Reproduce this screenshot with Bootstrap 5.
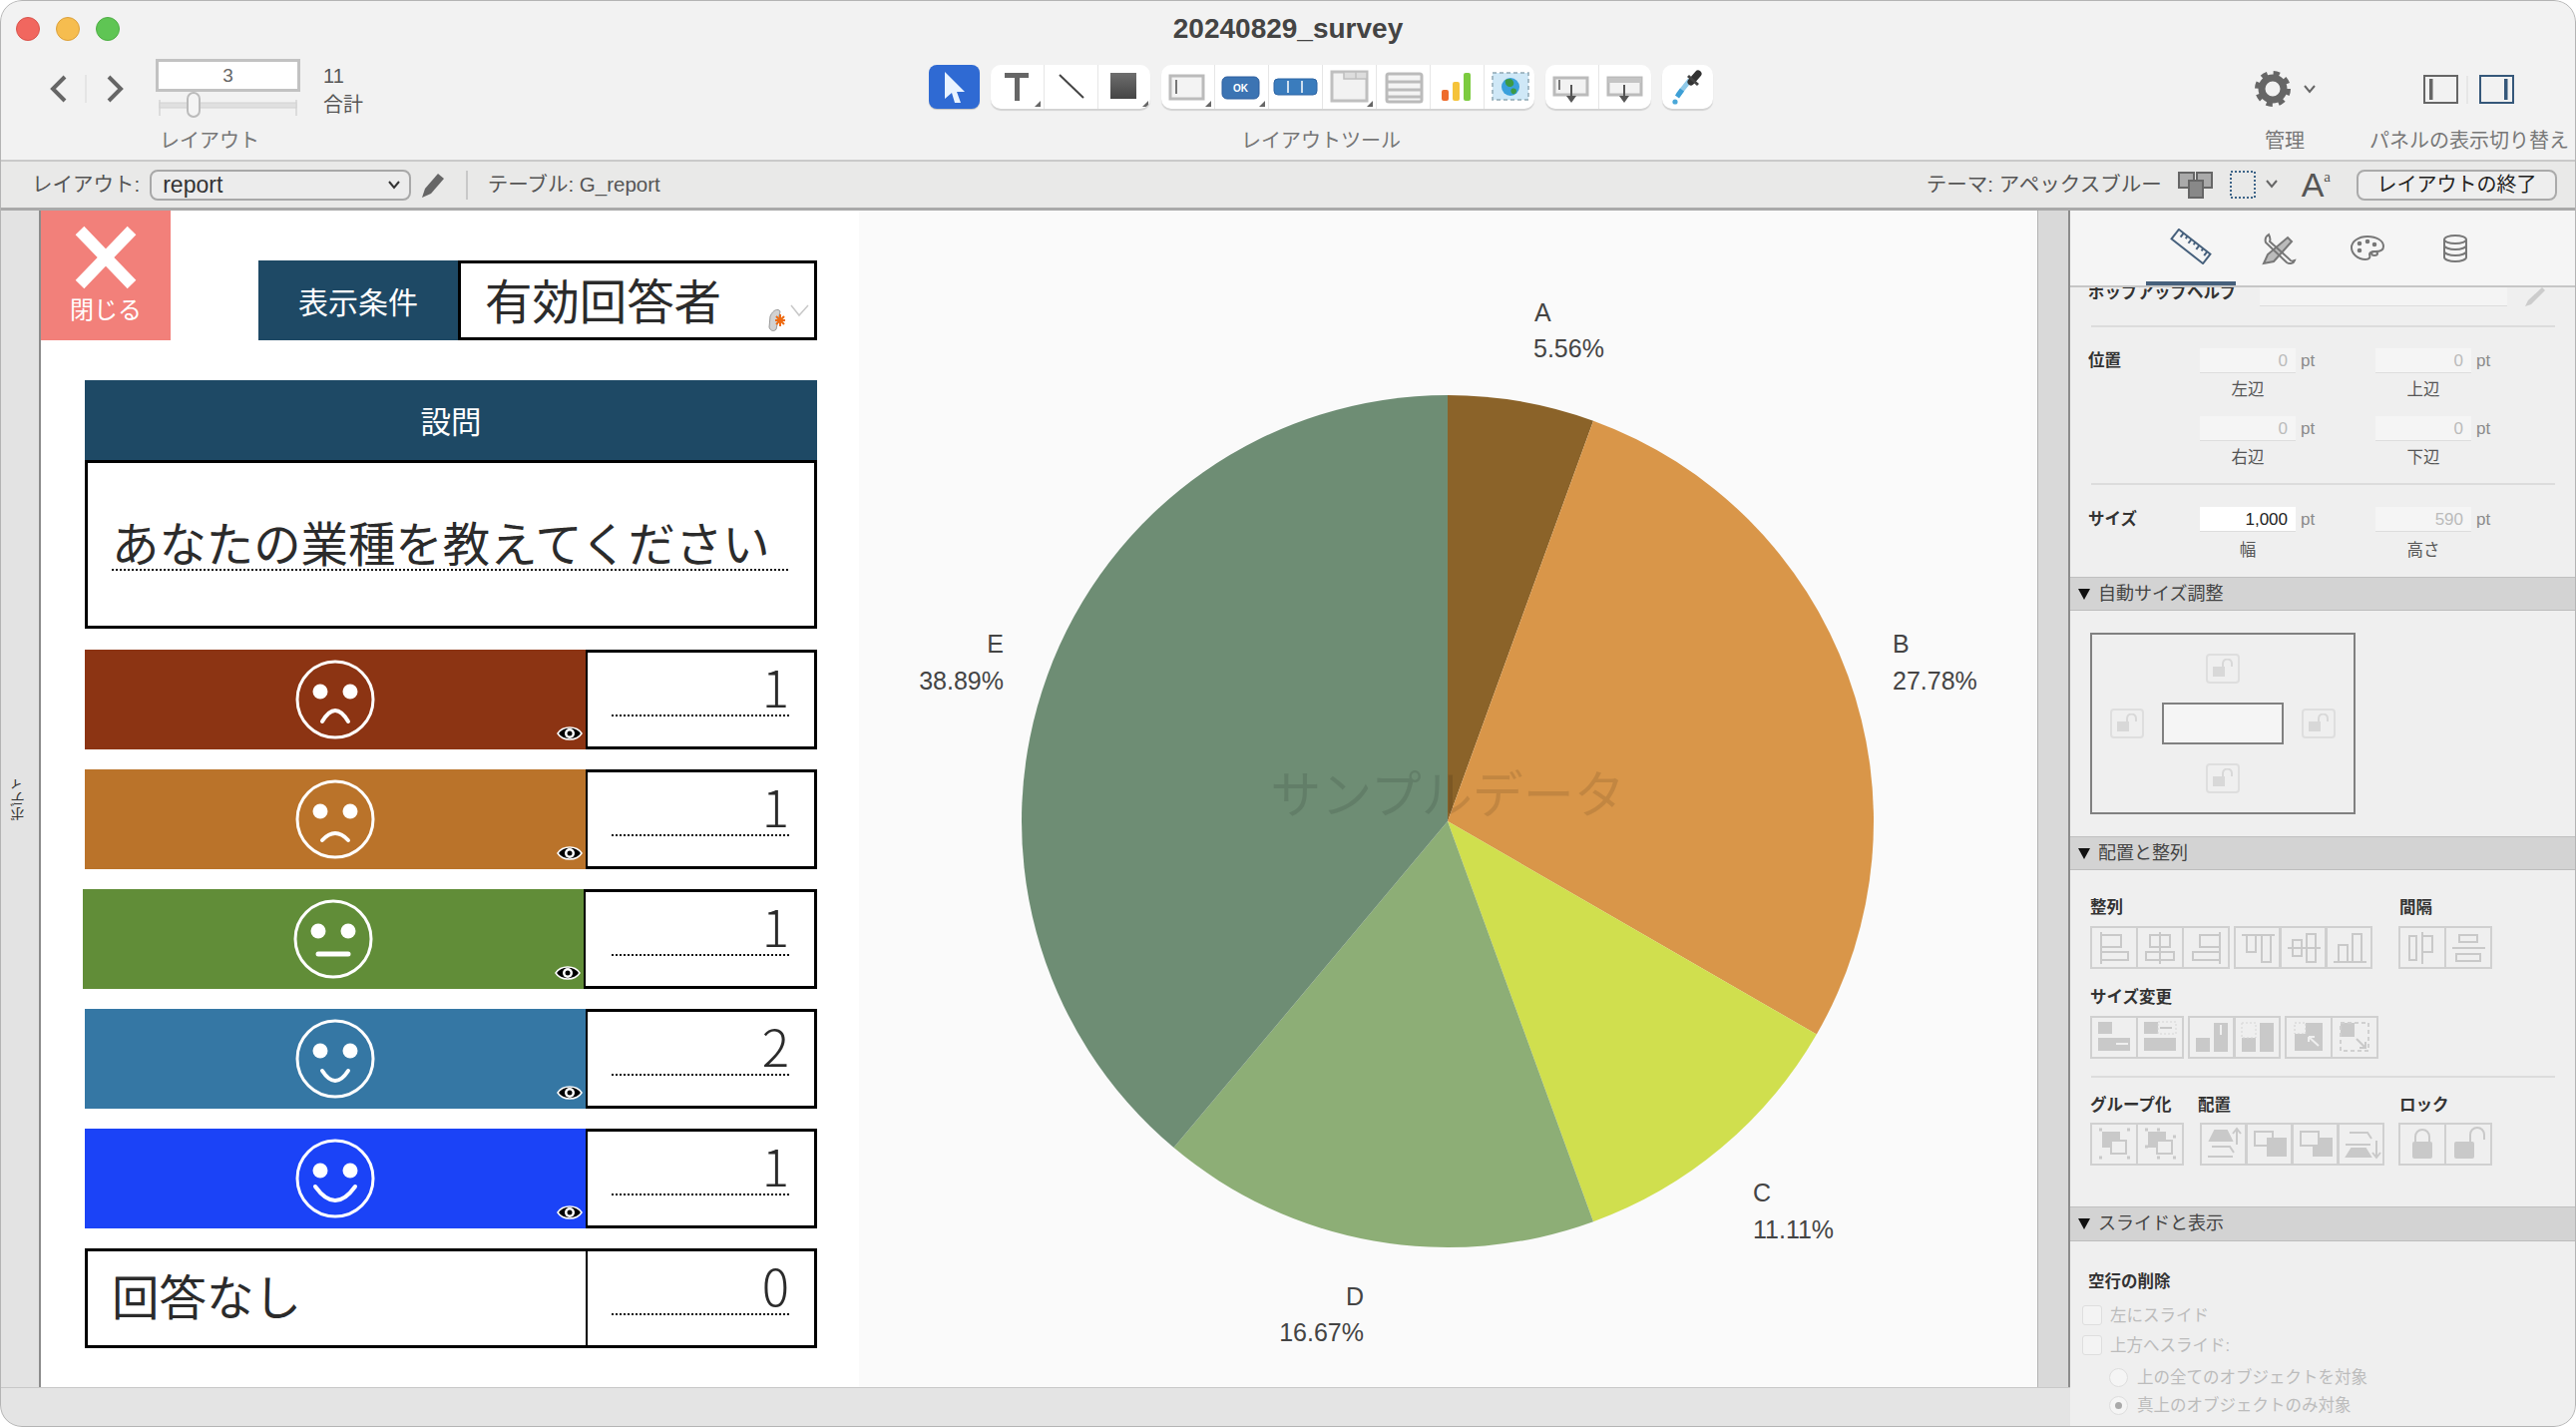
<!DOCTYPE html>
<html lang="ja">
<head>
<meta charset="utf-8">
<title>20240829_survey</title>
<link rel="stylesheet" href="https://cdn.jsdelivr.net/npm/bootstrap@5.3.0/dist/css/bootstrap.min.css">
<style>
html,body{margin:0;width:2582px;height:1430px;overflow:hidden;background:#fff}
body{font-family:"Liberation Sans","Noto Sans CJK JP",sans-serif;color:#333}
.win{width:2582px;height:1430px;border-radius:22px;overflow:hidden;background:#f2f2f2}
.win-edge{inset:0;border:1.5px solid #b4b4b4;border-radius:22px;pointer-events:none;z-index:9}
.tbar{height:162px;background:#f2f2f2;border-bottom:2px solid #c9c9c9}
.tb-top{height:58px;display:grid;grid-template-columns:1fr auto 1fr;align-items:center}
.lights{padding-left:16px;gap:16px}
.lamp{width:24px;height:24px;border-radius:50%}
.lamp-r{background:#f1675f;border:1px solid #d9534b}
.lamp-y{background:#f6bd4f;border:1px solid #dca03a}
.lamp-g{background:#5fc554;border:1px solid #4eae44}
.win-title{font-size:28px;font-weight:700;color:#444;line-height:1}
.tb-left{width:931px;padding-left:47px}
.navs{margin-top:14px;width:109px;height:34px}
.step-col{width:145px}
.stepper{margin-top:1px;height:33px;background:#fff;border:3px solid #c2c2c2;font-size:19px;color:#666;line-height:27px;text-align:center}
.slider-box{height:26px}
.tb-lab{font-size:20px;line-height:24px;color:#777;white-space:nowrap}
.tot{margin-left:23px;margin-top:4px;font-size:20px;line-height:29px;color:#555}
.tool-zone{height:71px;padding-top:7px;gap:11px}
.tool-btn{width:51px;height:44px;background:#2f6ad3;border-radius:8px;box-shadow:0 1px 1px rgba(0,0,0,.2)}
.tool-group{height:44px;background:#fff;border-radius:10px;box-shadow:0 2px 1px rgba(0,0,0,.13);overflow:hidden}
.tool-cell{flex:1 1 0;height:44px;border-left:1.5px solid #e6e6e6}
.tool-cell:first-child{border-left:0}
.tool-cell svg{display:block}
.g-three{width:160px}.g-seven{width:374px}.g-two{width:106px}.g-one{width:51px}
.tb-mgr{width:120px;margin-left:513px}
.tb-pan{width:202px;margin-left:24px}
.icon-zone{height:71px}
.sbar{height:49px;background:#e9e9e8;border-bottom:3px solid #a9a9a9;padding-left:32px;font-size:20.5px;color:#555}
.sel-box{width:262px;height:31px;margin-left:10px;border:2px solid #a8a8a8;border-radius:8px;background:#ececec;font-size:23px;line-height:25px;padding-left:11px;color:#333}
.vsep{width:1.5px;height:29px;background:#c8c8c8;margin:0 20px 0 19px}
.exit-btn{width:201px;height:31px;padding:0;border:2px solid #aaa;border-radius:8px;background:#eee;font-size:20px;line-height:25px;color:#222;margin:0 19px 0 26px}
.aa{font-size:34px;line-height:34px;color:#555;margin-left:18px;font-weight:400}
.aa sup{font-size:15px;top:-1em;font-family:"Liberation Serif",serif}
.work{height:1219px}
.work-left{width:2075px}
.work-top{height:1179px}
.gutter{width:41px;background:#e3e3e3;border-right:2px solid #8c8c8c}
.gut-text{writing-mode:vertical-rl;transform:rotate(180deg);font-size:15px;color:#333}
.form-pane{width:820px;background:#fff;font-family:"Noto Sans CJK JP",sans-serif;color:#2b2b2b}
.close-tile{width:130px;height:130px;background:#f2807a;color:#fff;font-size:24px;line-height:28px;padding-top:15px}
.cond{margin:50px 0 0 88px;height:80px;width:560px}
.cond-lab{width:200px;background:#1e4965;color:#fff;font-size:30px}
.cond-val{flex:1;border:3px solid #000;border-left-width:3px;font-size:47.5px;line-height:72px;padding-left:24px;letter-spacing:-.1px}
.tag-ic{right:4px;bottom:3px}
.q-wrap{margin:40px 0 0 44px;width:734px}
.q-head{height:81px;background:#1e4965;color:#fff;font-size:30.5px}
.q-body{height:169px;border:3px solid #000;padding:50px 0 0 24px;margin-top:-1px}
.q-text{display:block;width:678px;font-size:47.4px;line-height:57px;height:58px;border-bottom:2px dotted #111;white-space:nowrap}
.q-row{height:100px;margin-top:20px}
.q-row:first-of-type{margin-top:21px}
.face{width:502px}
.bg-a{background:#8c3413}.bg-b{background:#ba732a}.bg-c{background:#618d38}.bg-d{background:#3577a4}.bg-e{background:#1b43f7}
.eye-ic{right:3px;bottom:6px}
.shift-l{margin-left:-2px}
.num-box{flex:1;border:3px solid #000;border-left-width:2px;padding:0 25px 0 24px}
.num-in{height:64px;border-bottom:2px dotted #111;font-size:51px;line-height:66px;text-align:right;font-weight:300}
.none-lab{width:502px;border:3px solid #000;border-right:0;font-size:47.5px;line-height:88px;padding-left:24px}
.chart-pane{width:1181px;background:#fafafa}
.chart-pane svg{display:block}
.strip{width:33px;background:#d9d9d9;border-left:1px solid #b3b3b3;border-right:2px solid #8c8c8c}
.bbar{height:40px;background:#e4e4e4;border-top:1.5px solid #c8c8c8}
.insp{width:507px;background:#efefef;overflow:hidden;font-size:16.5px;color:#333}
.insp-tabs{height:77px;background:#f5f5f5;border-bottom:2px solid #c6c6c6;padding-left:76px}
.insp-tab{width:90px;height:75px}
.insp-tab.on{border-bottom:4px solid #46607c}
.help-row{height:19px;padding-left:18px;overflow:hidden}
.lbl{font-weight:700;line-height:22px;color:#333;white-space:nowrap}
.help-lab{margin-top:-6px;width:172px}
.help-fld{width:248px;height:19px;background:#f4f4f4;border-bottom:1px solid #ddd}
.insp-hr{height:2px;background:#dcdcdc;margin:0 21px 0 21px}
.mt-hr19{margin-top:19px}
.fgrid{display:grid;grid-template-columns:130px 96px 80px 96px 40px;padding-top:21px}
.fgrid.fg2{padding-top:22px}
.fgrid>.lbl{padding-left:18px;line-height:25px}
.pt-in{height:25px;background:#f5f5f5;border-bottom:1px solid #ddd;color:#bbb;font-size:17px;line-height:25px;text-align:right;padding-right:8px}
.pt-in.live{background:#fff;color:#222}
.pt-un{font-size:17px;line-height:25px;color:#8a8a8a;padding-left:5px}
.cap{text-align:center;color:#555;line-height:32px}
.cap-t{height:43px}.cap-b{height:42px}.cap-l{height:45px;line-height:36px}
.sec-head{height:34px;background:#d3d3d3;border-top:1px solid #c0c0c0;border-bottom:1px solid #bdbdbd;font-size:18px;line-height:32px;color:#444;padding-left:8px}
.tri{display:inline-block;width:0;height:0;border-left:6.5px solid transparent;border-right:6.5px solid transparent;border-top:11px solid #111;margin-right:8px}
.auto-box{margin:22px 0 22px 20px;width:266px;height:182px;border:2px solid #808080;display:grid;grid-template-columns:70px 122px 70px;grid-template-rows:68px 42px 68px;align-items:center;justify-items:center}
.auto-rect{width:122px;height:42px;border:2px solid #808080;background:#f5f5f5}
.lock-bt{width:34px;height:30px;border:2px solid #dedede;border-radius:4px}
.pad-l{padding-left:20px}
.ic-grp{height:43px}
.ic-cell{width:47.5px;height:43px;border:2px solid #d0d0d0;margin-left:-1.5px}
.ic-cell:first-child{margin-left:0}
.ic-cell svg{display:block;width:44px;height:39px}
.chk{width:20px;height:20px;border:1px solid #dedede;border-radius:3px;background:#f3f3f3;margin-right:8px}
.rad{width:19px;height:19px;border:1px solid #dedede;border-radius:50%;background:#f5f5f5;margin-right:9px}
.rad.on::after{content:"";width:7px;height:7px;border-radius:50%;background:#aaa;margin:auto}
.opt{color:#bcbcbc;line-height:20px;white-space:nowrap}
</style>
</head>
<body>
<div class="win position-relative">
  <div class="win-edge position-absolute"></div>

  <header class="tbar">
    <div class="tb-top">
      <div class="lights d-flex"><span class="lamp lamp-r"></span><span class="lamp lamp-y"></span><span class="lamp lamp-g"></span></div>
      <div class="win-title">20240829_survey</div>
      <div></div>
    </div>
    <div class="d-flex">
      <div class="tb-left d-flex align-items-start">
        <svg class="navs" viewBox="0 0 109 34"><path d="M17 5 5 17 17 29" transform="translate(1 0)" fill="none" stroke="#666" stroke-width="4"/><path d="M39 3v28" stroke="#e0e0e0" stroke-width="1.5"/><path d="M62 5 74 17 62 29" fill="none" stroke="#666" stroke-width="4"/></svg>
        <div class="step-col">
          <div class="stepper">3</div>
          <div class="slider-box">
            <svg width="145" height="26" viewBox="0 0 145 26"><path d="M4 8v16M141 8v16" stroke="#d5d5d5" stroke-width="1.5"/><rect x="4" y="11" width="137" height="5" fill="#e0e0e0" stroke="#d2d2d2" stroke-width="1"/><rect x="32" y="1" width="12" height="24" rx="6" fill="#f4f4f4" stroke="#bbb" stroke-width="2"/></svg>
          </div>
          <div class="tb-lab mt-2 ps-1" style="padding-top:3px">レイアウト</div>
        </div>
        <div class="tot"><div>11</div><div>合計</div></div>
      </div>
      <div class="d-flex flex-column align-items-center">
        <div class="tool-zone d-flex">
          <div class="tool-btn"><svg width="51" height="44" viewBox="0 0 51 44"><path d="M16 7 36 27 28 27 32 38 26 38 23 28 16 34Z" fill="#e9f3ff"/></svg></div>
          <div class="tool-group g-three d-flex">
            <div class="tool-cell"><svg width="53" height="44" viewBox="0 0 53 44"><path d="M14 8h24v5H29v23h-5V13H14Z" fill="#666"/><path d="M50 36v6h-6Z" fill="#666"/></svg></div>
            <div class="tool-cell"><svg width="53" height="44" viewBox="0 0 53 44"><path d="M15 10 39 33" stroke="#444" stroke-width="2"/></svg></div>
            <div class="tool-cell"><svg width="53" height="44" viewBox="0 0 53 44"><defs><linearGradient id="gr1" x1="0" y1="0" x2="0" y2="1"><stop offset="0" stop-color="#6e6e6e"/><stop offset="1" stop-color="#444"/></linearGradient></defs><rect x="12" y="8" width="26" height="26" fill="url(#gr1)"/><path d="M50 36v6h-6Z" fill="#666"/></svg></div>
          </div>
          <div class="tool-group g-seven d-flex">
            <div class="tool-cell"><svg width="53" height="44" viewBox="0 0 53 44"><rect x="9" y="11" width="33" height="23" fill="#f3f3f3" stroke="#bbb" stroke-width="3"/><path d="M15 15v14" stroke="#777" stroke-width="2"/><path d="M50 36v6h-6Z" fill="#666"/></svg></div>
            <div class="tool-cell"><svg width="53" height="44" viewBox="0 0 53 44"><rect x="7" y="12" width="37" height="22" rx="5" fill="#3c74b3" stroke="#2d5f9f"/><text x="25.5" y="27" text-anchor="middle" font-size="10" font-weight="700" fill="#fff" font-family="Liberation Sans">OK</text><path d="M50 36v6h-6Z" fill="#666"/></svg></div>
            <div class="tool-cell"><svg width="53" height="44" viewBox="0 0 53 44"><rect x="5" y="14" width="43" height="16" rx="4" fill="#3a7cbd" stroke="#2c64a4"/><path d="M19 16v12M33 16v12" stroke="#fff" stroke-width="1.5"/></svg></div>
            <div class="tool-cell"><svg width="53" height="44" viewBox="0 0 53 44"><rect x="9" y="7" width="35" height="29" fill="#f2f2f2" stroke="#bfbfbf" stroke-width="3"/><rect x="21" y="7" width="23" height="7" fill="#ddd" stroke="#bfbfbf" stroke-width="1.5"/><path d="M33 7v7" stroke="#bfbfbf" stroke-width="1.5"/><path d="M50 36v6h-6Z" fill="#666"/></svg></div>
            <div class="tool-cell"><svg width="53" height="44" viewBox="0 0 53 44"><rect x="10" y="9" width="35" height="28" rx="2" fill="#f4f4f4" stroke="#bbb" stroke-width="3"/><path d="M10 17h35M10 25h35M10 32h35" stroke="#bbb" stroke-width="3"/></svg></div>
            <div class="tool-cell"><svg width="53" height="44" viewBox="0 0 53 44"><rect x="11" y="25" width="7" height="11" rx="2" fill="#ee6c2c"/><rect x="22" y="17" width="7" height="19" rx="2" fill="#f5c33a"/><rect x="33" y="8" width="7" height="28" rx="2" fill="#7ccb3f"/></svg></div>
            <div class="tool-cell"><svg width="53" height="44" viewBox="0 0 53 44"><rect x="8" y="8" width="36" height="27" fill="#cfe8f7" stroke="#8fa8b4" stroke-width="1.5" stroke-dasharray="4 3"/><circle cx="26" cy="22" r="9" fill="#3aa0dc"/><path d="M21 15c4-2 7-1 8 2s-1 5-4 5-5-4-4-7ZM27 24c3-1 5 0 5 2s-2 4-4 3-2-4-1-5Z" fill="#3d9a45"/></svg></div>
          </div>
          <div class="tool-group g-two d-flex">
            <div class="tool-cell"><svg width="53" height="44" viewBox="0 0 53 44"><rect x="9" y="13" width="33" height="17" fill="#f2f2f2" stroke="#bbb" stroke-width="3"/><path d="M14 15v10" stroke="#777" stroke-width="2"/><path d="M26 20v12" stroke="#555" stroke-width="2"/><path d="M21 31h10l-5 7Z" fill="#555"/></svg></div>
            <div class="tool-cell"><svg width="53" height="44" viewBox="0 0 53 44"><rect x="9" y="13" width="33" height="17" fill="#f2f2f2" stroke="#bbb" stroke-width="3"/><rect x="9" y="13" width="33" height="5" fill="#c4c4c4"/><path d="M25 20v12" stroke="#555" stroke-width="2"/><path d="M20 31h10l-5 7Z" fill="#555"/></svg></div>
          </div>
          <div class="tool-group g-one"><svg width="51" height="44" viewBox="0 0 51 44"><path d="M16 30 28 15" stroke="#8fc9e8" stroke-width="5"/><path d="M15 32 20 25" stroke="#3d9fd6" stroke-width="5"/><path d="M29 17 36 9" stroke="#333" stroke-width="7" stroke-linecap="round"/><path d="M26 11 36 20" stroke="#444" stroke-width="3"/><circle cx="13" cy="37" r="2.6" fill="#4aa7d8"/></svg></div>
        </div>
        <div class="tb-lab">レイアウトツール</div>
      </div>
      <div class="tb-mgr d-flex flex-column align-items-center">
        <div class="icon-zone d-flex align-items-start" style="padding-top:12px">
          <svg width="64" height="38" viewBox="0 0 64 38"><circle cx="20" cy="19" r="11" fill="none" stroke="#666" stroke-width="7"/><circle cx="20" cy="19" r="15.5" fill="none" stroke="#666" stroke-width="5" stroke-dasharray="6.2 6"/><path d="M52 16l5 6 5-6" fill="none" stroke="#666" stroke-width="2"/></svg>
        </div>
        <div class="tb-lab">管理</div>
      </div>
      <div class="tb-pan d-flex flex-column align-items-center">
        <div class="icon-zone d-flex align-items-start" style="padding-top:17px">
          <svg width="92" height="30" viewBox="0 0 92 30"><rect x="1" y="1" width="33" height="27" fill="none" stroke="#666" stroke-width="2"/><rect x="6" y="4" width="3.5" height="21" fill="#666"/><path d="M44 1v28" stroke="#e2e2e2" stroke-width="1.5"/><rect x="57" y="1" width="33" height="27" fill="none" stroke="#36587a" stroke-width="2"/><rect x="81" y="4" width="3.5" height="21" fill="#36587a"/></svg>
        </div>
        <div class="tb-lab">パネルの表示切り替え</div>
      </div>
    </div>
  </header>

  <div class="sbar d-flex align-items-center">
    <span>レイアウト:</span>
    <div class="sel-box d-flex align-items-center justify-content-between">
      <span>report</span>
      <svg class="me-2" width="14" height="10" viewBox="0 0 14 10"><path d="M2 2l5 6 5-6" fill="none" stroke="#333" stroke-width="2"/></svg>
    </div>
    <svg class="ms-2" width="28" height="30" viewBox="0 0 28 30"><path d="M3 28l3-9L19 4l6 5L12 24Z" fill="#666"/></svg>
    <span class="vsep"></span>
    <span>テーブル: G_report</span>
    <div class="ms-auto d-flex align-items-center">
      <span>テーマ: アペックスブルー</span>
      <svg class="ms-3" width="36" height="28" viewBox="0 0 36 28"><rect x="1" y="2" width="15" height="15" fill="#aaa" stroke="#666" stroke-width="2"/><rect x="19" y="2" width="15" height="15" fill="#aaa" stroke="#666" stroke-width="2"/><rect x="11" y="10" width="14" height="17" fill="#888" stroke="#666" stroke-width="2"/></svg>
      <svg class="ms-3" width="54" height="30" viewBox="0 0 54 30"><rect x="1" y="2" width="24" height="26" fill="none" stroke="#3d6488" stroke-width="2" stroke-dasharray="2 2"/><path d="M37 11l5 6 5-6" fill="none" stroke="#666" stroke-width="2"/></svg>
      <span class="aa">A<sup>a</sup></span>
      <button class="btn exit-btn" type="button">レイアウトの終了</button>
    </div>
  </div>

  <div class="work d-flex">
    <div class="work-left d-flex flex-column">
      <div class="work-top d-flex">
        <aside class="gutter d-flex align-items-center justify-content-center"><span class="gut-text">ボディ</span></aside>

        <section class="form-pane">
          <div class="d-flex">
            <div class="close-tile d-flex flex-column align-items-center">
              <svg width="66" height="66" viewBox="0 0 66 66"><path d="M7 5 59 59M59 5 7 59" stroke="#fff" stroke-width="12"/></svg>
              <span style="margin-top:3px">閉じる</span>
            </div>
            <div class="cond d-flex">
              <div class="cond-lab d-flex align-items-center justify-content-center">表示条件</div>
              <div class="cond-val position-relative">有効回答者
                <svg class="tag-ic position-absolute" width="44" height="32" viewBox="0 0 44 32"><path d="M4 14c3-7 8-8 10-5l-4 18c-3 3-6 1-7-2Z" fill="#d2d2d2" stroke="#999" stroke-width="1"/><path d="M14 12v12M9 18h10M10 14l8 8M18 14l-8 8" stroke="#ee6a10" stroke-width="2"/><path d="M25 3l8 10 9-10" fill="none" stroke="#c8c8c8" stroke-width="1.5"/></svg>
              </div>
            </div>
          </div>
          <div class="q-wrap">
            <div class="q-head d-flex align-items-center justify-content-center">設問</div>
            <div class="q-body"><span class="q-text">あなたの業種を教えてください</span></div>

            <div class="q-row d-flex" style="margin-top:21px">
              <div class="face bg-a position-relative d-flex align-items-center justify-content-center">
                <svg width="84" height="84" viewBox="-42 -42 84 84" fill="none" stroke="#fff"><circle r="38" stroke-width="3"/><circle cx="-15" cy="-8" r="7.5" fill="#fff" stroke="none"/><circle cx="15" cy="-8" r="7.5" fill="#fff" stroke="none"/><path d="M-13 22Q0 0 13 22" stroke-width="4" stroke-linecap="round"/></svg>
                <svg class="eye-ic position-absolute" width="26" height="20" viewBox="0 0 26 20"><path d="M1 10C6 2 20 2 25 10 20 18 6 18 1 10Z" fill="#000" stroke="#fff" stroke-width="1.5"/><circle cx="13" cy="10" r="5" fill="#fff"/><circle cx="13" cy="10" r="2.5" fill="#000"/></svg>
              </div>
              <div class="num-box"><div class="num-in">1</div></div>
            </div>
            <div class="q-row d-flex">
              <div class="face bg-b position-relative d-flex align-items-center justify-content-center">
                <svg width="84" height="84" viewBox="-42 -42 84 84" fill="none" stroke="#fff"><circle r="38" stroke-width="3"/><circle cx="-15" cy="-8" r="7.5" fill="#fff" stroke="none"/><circle cx="15" cy="-8" r="7.5" fill="#fff" stroke="none"/><path d="M-13 21Q0 7 13 21" stroke-width="4" stroke-linecap="round"/></svg>
                <svg class="eye-ic position-absolute" width="26" height="20" viewBox="0 0 26 20"><path d="M1 10C6 2 20 2 25 10 20 18 6 18 1 10Z" fill="#000" stroke="#fff" stroke-width="1.5"/><circle cx="13" cy="10" r="5" fill="#fff"/><circle cx="13" cy="10" r="2.5" fill="#000"/></svg>
              </div>
              <div class="num-box"><div class="num-in">1</div></div>
            </div>
            <div class="q-row d-flex shift-l">
              <div class="face bg-c position-relative d-flex align-items-center justify-content-center">
                <svg width="84" height="84" viewBox="-42 -42 84 84" fill="none" stroke="#fff"><circle r="38" stroke-width="3"/><circle cx="-15" cy="-8" r="7.5" fill="#fff" stroke="none"/><circle cx="15" cy="-8" r="7.5" fill="#fff" stroke="none"/><path d="M-15 15H15" stroke-width="5" stroke-linecap="round"/></svg>
                <svg class="eye-ic position-absolute" width="26" height="20" viewBox="0 0 26 20"><path d="M1 10C6 2 20 2 25 10 20 18 6 18 1 10Z" fill="#000" stroke="#fff" stroke-width="1.5"/><circle cx="13" cy="10" r="5" fill="#fff"/><circle cx="13" cy="10" r="2.5" fill="#000"/></svg>
              </div>
              <div class="num-box" style="padding-left:26px"><div class="num-in">1</div></div>
            </div>
            <div class="q-row d-flex">
              <div class="face bg-d position-relative d-flex align-items-center justify-content-center">
                <svg width="84" height="84" viewBox="-42 -42 84 84" fill="none" stroke="#fff"><circle r="38" stroke-width="3"/><circle cx="-15" cy="-8" r="7.5" fill="#fff" stroke="none"/><circle cx="15" cy="-8" r="7.5" fill="#fff" stroke="none"/><path d="M-13 12Q0 32 13 12" stroke-width="4" stroke-linecap="round"/></svg>
                <svg class="eye-ic position-absolute" width="26" height="20" viewBox="0 0 26 20"><path d="M1 10C6 2 20 2 25 10 20 18 6 18 1 10Z" fill="#000" stroke="#fff" stroke-width="1.5"/><circle cx="13" cy="10" r="5" fill="#fff"/><circle cx="13" cy="10" r="2.5" fill="#000"/></svg>
              </div>
              <div class="num-box"><div class="num-in">2</div></div>
            </div>
            <div class="q-row d-flex">
              <div class="face bg-e position-relative d-flex align-items-center justify-content-center">
                <svg width="84" height="84" viewBox="-42 -42 84 84" fill="none" stroke="#fff"><circle r="38" stroke-width="3"/><circle cx="-15" cy="-8" r="7.5" fill="#fff" stroke="none"/><circle cx="15" cy="-8" r="7.5" fill="#fff" stroke="none"/><path d="M-20 8Q0 36 20 8" stroke-width="4" stroke-linecap="round"/></svg>
                <svg class="eye-ic position-absolute" width="26" height="20" viewBox="0 0 26 20"><path d="M1 10C6 2 20 2 25 10 20 18 6 18 1 10Z" fill="#000" stroke="#fff" stroke-width="1.5"/><circle cx="13" cy="10" r="5" fill="#fff"/><circle cx="13" cy="10" r="2.5" fill="#000"/></svg>
              </div>
              <div class="num-box"><div class="num-in">1</div></div>
            </div>
            <div class="q-row d-flex">
              <div class="none-lab">回答なし</div>
              <div class="num-box"><div class="num-in">0</div></div>
            </div>
          </div>
        </section>

        <section class="chart-pane">
          <svg width="1181" height="1179" viewBox="0 0 1181 1179" font-family="Liberation Sans, Noto Sans CJK JP, sans-serif" font-size="25" fill="#444">
            <path d="M590 612V185A427 427 0 0 1 736.04 210.75Z" fill="#8b6329"/>
            <path d="M590 612 736.04 210.75A427 427 0 0 1 959.8 825.5Z" fill="#d99649"/>
            <path d="M590 612 959.8 825.5A427 427 0 0 1 736.04 1013.25Z" fill="#d0df4e"/>
            <path d="M590 612 736.04 1013.25A427 427 0 0 1 315.53 939.1Z" fill="#8dae76"/>
            <path d="M590 612 315.53 939.1A427 427 0 0 1 590 185Z" fill="#6e8d74"/>
            <text x="590" y="604" text-anchor="middle" font-size="51" fill="#000" fill-opacity=".1" font-family="Noto Sans CJK JP, sans-serif">サンプルデータ</text>
            <text x="677" y="111">A</text><text x="676" y="147">5.56%</text>
            <text x="1036" y="443">B</text><text x="1036" y="480">27.78%</text>
            <text x="896" y="993">C</text><text x="896" y="1030">11.11%</text>
            <text x="506" y="1097" text-anchor="end">D</text><text x="506" y="1133" text-anchor="end">16.67%</text>
            <text x="145" y="443" text-anchor="end">E</text><text x="145" y="480" text-anchor="end">38.89%</text>
          </svg>
        </section>
        <div class="strip"></div>
      </div>
      <div class="bbar"></div>
    </div>

    <aside class="insp d-flex flex-column">
      <div class="insp-tabs d-flex position-relative" style="z-index:2">
        <div class="insp-tab on d-flex justify-content-center align-items-center">
          <svg width="44" height="36" viewBox="0 0 44 36"><g transform="rotate(38 22 18)" fill="none" stroke="#46607c" stroke-width="2"><rect x="2" y="12" width="40" height="12"/><path d="M8 12v5M13 12v3M18 12v5M23 12v3M28 12v5M33 12v3M38 12v5"/></g></svg>
        </div>
        <div class="d-flex justify-content-center align-items-center" style="width:86px;height:75px">
          <svg width="36" height="34" viewBox="0 0 36 34" fill="none" stroke="#777" stroke-width="2"><path d="M3 32l4-9 20-17 4 4-18 20Z" fill="#bbb"/><path d="M8 3a7 7 0 0 0-3 8l21 20c3 2 7 1 8-2-3 1-4 1-5-1L9 10c1-2 0-5-1-7Z"/></svg>
        </div>
        <div class="d-flex justify-content-center align-items-center" style="width:92px;height:75px">
          <svg width="34" height="28" viewBox="0 0 34 28" fill="none" stroke="#777" stroke-width="2"><path d="M17 2C8 2 1 7 1 13s6 12 14 12c4 0 5-2 4-5 0-3 3-3 6-3 5 0 8-1 8-5C33 6 26 2 17 2Z"/><circle cx="9" cy="9" r="1.3" fill="#777"/><circle cx="17" cy="7" r="1.3" fill="#777"/><circle cx="24" cy="10" r="1.3" fill="#777"/><circle cx="9" cy="16" r="1.3" fill="#777"/><ellipse cx="24" cy="19" rx="3" ry="2"/></svg>
        </div>
        <div class="d-flex justify-content-center align-items-center" style="width:84px;height:75px">
          <svg width="26" height="28" viewBox="0 0 26 28" fill="none" stroke="#777" stroke-width="2"><ellipse cx="13" cy="5" rx="11" ry="4"/><path d="M2 5v18c0 2 5 4 11 4s11-2 11-4V5M2 11c0 2 5 4 11 4s11-2 11-4M2 17c0 2 5 4 11 4s11-2 11-4"/></svg>
        </div>
      </div>

      <div class="help-row d-flex">
        <span class="lbl help-lab">ポップアップヘルプ</span>
        <span class="help-fld"></span>
        <svg class="ms-3" width="24" height="19" viewBox="0 0 24 19"><path d="M2 19l3-6L19 0l3 3L8 17Z" fill="#ccc"/></svg>
      </div>
      <div class="insp-hr mt-hr19"></div>
      <div class="fgrid">
        <div class="lbl">位置</div><div class="pt-in">0</div><div class="pt-un">pt</div><div class="pt-in">0</div><div class="pt-un">pt</div>
        <div class="cap-t"></div><div class="cap cap-t">左辺</div><div class="cap-t"></div><div class="cap cap-t">上辺</div><div class="cap-t"></div>
        <div></div><div class="pt-in">0</div><div class="pt-un">pt</div><div class="pt-in">0</div><div class="pt-un">pt</div>
        <div class="cap-b"></div><div class="cap cap-b">右辺</div><div class="cap-b"></div><div class="cap cap-b">下辺</div><div class="cap-b"></div>
      </div>
      <div class="insp-hr"></div>
      <div class="fgrid fg2">
        <div class="lbl">サイズ</div><div class="pt-in live">1,000</div><div class="pt-un">pt</div><div class="pt-in">590</div><div class="pt-un">pt</div>
        <div class="cap-l"></div><div class="cap cap-l">幅</div><div class="cap-l"></div><div class="cap cap-l">高さ</div><div class="cap-l"></div>
      </div>

      <div class="sec-head"><span class="tri"></span>自動サイズ調整</div>
      <div class="auto-box">
        <span></span>
        <div class="lock-bt d-flex align-items-center justify-content-center"><svg width="24" height="20" viewBox="0 0 24 20"><rect x="2" y="8" width="12" height="10" fill="#d8d8d8"/><path d="M12 8V5a4.5 4.5 0 0 1 9 0v3" fill="none" stroke="#d8d8d8" stroke-width="2"/></svg></div>
        <span></span>
        <div class="lock-bt d-flex align-items-center justify-content-center"><svg width="24" height="20" viewBox="0 0 24 20"><rect x="2" y="8" width="12" height="10" fill="#d8d8d8"/><path d="M12 8V5a4.5 4.5 0 0 1 9 0v3" fill="none" stroke="#d8d8d8" stroke-width="2"/></svg></div>
        <div class="auto-rect"></div>
        <div class="lock-bt d-flex align-items-center justify-content-center"><svg width="24" height="20" viewBox="0 0 24 20"><rect x="2" y="8" width="12" height="10" fill="#d8d8d8"/><path d="M12 8V5a4.5 4.5 0 0 1 9 0v3" fill="none" stroke="#d8d8d8" stroke-width="2"/></svg></div>
        <span></span>
        <div class="lock-bt d-flex align-items-center justify-content-center"><svg width="24" height="20" viewBox="0 0 24 20"><rect x="2" y="8" width="12" height="10" fill="#d8d8d8"/><path d="M12 8V5a4.5 4.5 0 0 1 9 0v3" fill="none" stroke="#d8d8d8" stroke-width="2"/></svg></div>
        <span></span>
      </div>

      <div class="sec-head"><span class="tri"></span>配置と整列</div>
      <div class="pad-l d-flex" style="margin-top:26px"><div class="lbl" style="width:310px">整列</div><div class="lbl">間隔</div></div>
      <div class="pad-l d-flex" style="margin-top:8px">
        <div class="ic-grp d-flex" style="margin-right:4px">
          <div class="ic-cell"><svg viewBox="0 0 44 39" fill="none" stroke="#c9c9c9" stroke-width="2"><path d="M9 4v32"/><rect x="9" y="7" width="20" height="12"/><rect x="9" y="24" width="27" height="8"/></svg></div>
          <div class="ic-cell"><svg viewBox="0 0 44 39" fill="none" stroke="#c9c9c9" stroke-width="2"><path d="M22 4v32"/><rect x="12" y="7" width="20" height="12"/><rect x="8" y="24" width="28" height="8"/></svg></div>
          <div class="ic-cell"><svg viewBox="0 0 44 39" fill="none" stroke="#c9c9c9" stroke-width="2"><path d="M36 4v32"/><rect x="16" y="7" width="20" height="12"/><rect x="9" y="24" width="27" height="8"/></svg></div>
        </div>
        <div class="ic-grp d-flex" style="margin-right:26px">
          <div class="ic-cell"><svg viewBox="0 0 44 39" fill="none" stroke="#c9c9c9" stroke-width="2"><path d="M6 7h33"/><rect x="11" y="7" width="9" height="17"/><rect x="26" y="7" width="9" height="27"/></svg></div>
          <div class="ic-cell"><svg viewBox="0 0 44 39" fill="none" stroke="#c9c9c9" stroke-width="2"><path d="M6 20h33"/><rect x="11" y="12" width="9" height="16"/><rect x="25" y="6" width="9" height="28"/></svg></div>
          <div class="ic-cell"><svg viewBox="0 0 44 39" fill="none" stroke="#c9c9c9" stroke-width="2"><path d="M6 34h33"/><rect x="11" y="17" width="9" height="17"/><rect x="25" y="6" width="9" height="28"/></svg></div>
        </div>
        <div class="ic-grp d-flex">
          <div class="ic-cell"><svg viewBox="0 0 44 39" fill="none" stroke="#c9c9c9" stroke-width="2"><path d="M22 4v32"/><rect x="9" y="8" width="7" height="24"/><path d="M22 8h10v16H22"/></svg></div>
          <div class="ic-cell"><svg viewBox="0 0 44 39" fill="none" stroke="#c9c9c9" stroke-width="2"><path d="M6 20h33"/><rect x="13" y="7" width="18" height="7"/><rect x="10" y="26" width="24" height="7"/></svg></div>
        </div>
      </div>
      <div class="pad-l lbl" style="margin-top:17px">サイズ変更</div>
      <div class="pad-l d-flex" style="margin-top:8px">
        <div class="ic-grp d-flex" style="margin-right:4px">
          <div class="ic-cell"><svg viewBox="0 0 44 39" fill="#c9c9c9" stroke="none"><rect x="6" y="4" width="14" height="12"/><rect x="6" y="20" width="32" height="13"/><path d="M24 26h12" stroke="#efefef" stroke-width="2"/></svg></div>
          <div class="ic-cell"><svg viewBox="0 0 44 39" fill="#c9c9c9" stroke="none"><rect x="6" y="4" width="14" height="12"/><rect x="6" y="20" width="32" height="13"/><path d="M22 10h12" stroke="#c9c9c9" stroke-width="2"/><rect x="20" y="4" width="18" height="12" fill="none" stroke="#d5d5d5" stroke-dasharray="2 2"/></svg></div>
        </div>
        <div class="ic-grp d-flex" style="margin-right:4px">
          <div class="ic-cell"><svg viewBox="0 0 44 39" fill="#c9c9c9" stroke="none"><rect x="6" y="20" width="14" height="14"/><rect x="24" y="5" width="14" height="29"/><path d="M31 7v10" stroke="#efefef" stroke-width="2"/></svg></div>
          <div class="ic-cell"><svg viewBox="0 0 44 39" fill="#c9c9c9" stroke="none"><rect x="6" y="20" width="14" height="14"/><rect x="24" y="5" width="14" height="29"/><rect x="6" y="5" width="14" height="15" fill="none" stroke="#d5d5d5" stroke-dasharray="2 2"/></svg></div>
        </div>
        <div class="ic-grp d-flex">
          <div class="ic-cell"><svg viewBox="0 0 44 39" fill="#c9c9c9" stroke="none"><rect x="8" y="5" width="28" height="28"/><path d="M22 19l10 9M22 19v5M22 19h6" stroke="#efefef" stroke-width="2" fill="none"/><rect x="8" y="5" width="11" height="11" fill="#efefef" stroke="#d0d0d0" stroke-dasharray="2 2"/></svg></div>
          <div class="ic-cell"><svg viewBox="0 0 44 39" fill="#c9c9c9" stroke="none"><rect x="8" y="5" width="14" height="14"/><rect x="8" y="5" width="28" height="28" fill="none" stroke="#d0d0d0" stroke-width="2" stroke-dasharray="4 3"/><path d="M24 21l9 9M33 24v6h-6" fill="none" stroke="#c9c9c9" stroke-width="2"/></svg></div>
        </div>
      </div>
      <div class="insp-hr" style="margin-top:17px"></div>
      <div class="pad-l d-flex" style="margin-top:16px"><div class="lbl" style="width:108px">グループ化</div><div class="lbl" style="width:202px">配置</div><div class="lbl">ロック</div></div>
      <div class="pad-l d-flex" style="margin-top:7px">
        <div class="ic-grp d-flex" style="margin-right:16px">
          <div class="ic-cell"><svg viewBox="0 0 44 39" stroke="#c9c9c9" stroke-width="2"><rect x="11" y="8" width="16" height="14" fill="#c9c9c9"/><rect x="19" y="16" width="15" height="13" fill="#efefef"/><path d="M7 5h3M35 5h3M7 33h3M35 33h3" stroke-width="3"/></svg></div>
          <div class="ic-cell"><svg viewBox="0 0 44 39" stroke="#c9c9c9" stroke-width="2"><rect x="11" y="8" width="16" height="14" fill="#c9c9c9"/><rect x="19" y="16" width="15" height="13" fill="#efefef"/><path d="M7 5h3M19 5h3M35 12h3M7 22h3M19 33h3M35 33h3" stroke-width="3"/></svg></div>
        </div>
        <div class="ic-grp d-flex" style="margin-right:14px">
          <div class="ic-cell"><svg viewBox="0 0 44 39" fill="none" stroke="#c9c9c9" stroke-width="2"><path d="M13 6h12l5 10H8Z" fill="#c9c9c9"/><path d="M10 22h18l4 6M6 32h25M35 20V5M31 9l4-5 4 5"/></svg></div>
          <div class="ic-cell"><svg viewBox="0 0 44 39" fill="#c9c9c9" stroke="#c9c9c9" stroke-width="2"><rect x="20" y="14" width="18" height="17"/><rect x="7" y="7" width="18" height="14" fill="none"/></svg></div>
          <div class="ic-cell"><svg viewBox="0 0 44 39" fill="#c9c9c9" stroke="#c9c9c9" stroke-width="2"><rect x="20" y="14" width="18" height="17"/><rect x="7" y="7" width="18" height="14" fill="#efefef"/></svg></div>
          <div class="ic-cell"><svg viewBox="0 0 44 39" fill="none" stroke="#c9c9c9" stroke-width="2"><path d="M10 8h18l4 6M6 20h25"/><path d="M12 24h14l5 8H7Z" fill="#c9c9c9"/><path d="M37 16v16M33 28l4 5 4-5"/></svg></div>
        </div>
        <div class="ic-grp d-flex">
          <div class="ic-cell"><svg viewBox="0 0 44 39" fill="none"><rect x="12" y="17" width="20" height="17" rx="2" fill="#c9c9c9"/><path d="M15 18v-6a7 7 0 0 1 14 0v6" stroke="#c9c9c9" stroke-width="2"/></svg></div>
          <div class="ic-cell"><svg viewBox="0 0 44 39" fill="none"><rect x="8" y="17" width="20" height="17" rx="2" fill="#c9c9c9"/><path d="M24 18V10a7 7 0 0 1 14 0v5" stroke="#c9c9c9" stroke-width="2"/></svg></div>
        </div>
      </div>

      <div class="sec-head" style="margin-top:41px;height:35px"><span class="tri"></span>スライドと表示</div>
      <div class="lbl" style="margin:29px 0 0 18px">空行の削除</div>
      <div class="d-flex align-items-center" style="margin:13px 0 0 12px"><span class="chk"></span><span class="opt">左にスライド</span></div>
      <div class="d-flex align-items-center" style="margin:10px 0 0 12px"><span class="chk"></span><span class="opt">上方へスライド:</span></div>
      <div class="d-flex align-items-center" style="margin:12px 0 0 39px"><span class="rad"></span><span class="opt">上の全てのオブジェクトを対象</span></div>
      <div class="d-flex align-items-center" style="margin:8px 0 0 39px"><span class="rad on d-flex"></span><span class="opt">真上のオブジェクトのみ対象</span></div>
    </aside>
  </div>
</div>
<script src="https://cdn.jsdelivr.net/npm/bootstrap@5.3.0/dist/js/bootstrap.bundle.min.js"></script>
</body>
</html>
